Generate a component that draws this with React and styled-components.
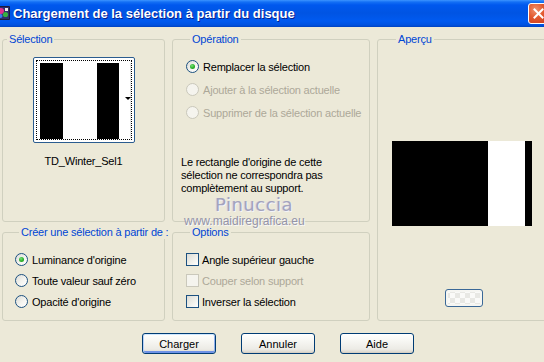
import React from 'react';
import styled, { createGlobalStyle } from 'styled-components';

const GlobalStyle = createGlobalStyle`
  html, body { margin: 0; padding: 0; background: #ECE9D8; }
  body {
    width: 544px; height: 362px; overflow: hidden;
    font-family: "Liberation Sans", Arial, sans-serif;
    font-size: 11px;
  }
  #root { width: 544px; height: 362px; }
`;

const Window = styled.div`
  position: relative;
  width: 544px;
  height: 362px;
  background: #ECE9D8;
  display: flex;
  flex-direction: column;
  overflow: hidden;
  color: #000;
  font-family: "Liberation Sans", Arial, sans-serif;
  font-size: 11px;
  letter-spacing: -0.2px;
`;

const TitleBar = styled.div`
  flex: none;
  height: 27px;
  display: flex;
  align-items: center;
  background: linear-gradient(180deg,
    #3D95FF 0px, #1470F5 2px, #0058EE 5px, #0054E3 13px,
    #005AF0 21px, #0052E0 25px, #0042C0 27px);
`;

const AppIcon = styled.svg`
  flex: none;
  width: 14px;
  height: 14px;
  margin-left: -4px;
  margin-top: -1px;
`;

const TitleText = styled.div`
  margin-left: 3px;
  color: #fff;
  font-family: "Liberation Sans", Arial, sans-serif;
  font-weight: bold;
  font-size: 13px;
  letter-spacing: 0;
  text-shadow: 1px 1px 0 #0A1E8C;
  white-space: nowrap;
`;

const CloseButton = styled.div`
  flex: none;
  margin-left: auto;
  margin-right: -5px;
  width: 21px;
  height: 21px;
  box-sizing: border-box;
  border: 1px solid #fff;
  border-radius: 3px;
  background: radial-gradient(circle at 35% 30%, #F0926E 0%, #E2592F 45%, #C8391A 100%);
  display: flex;
  align-items: center;
  justify-content: center;
`;

const Body = styled.div`
  flex: 1;
  display: flex;
  flex-direction: column;
  padding: 6px 0 0 2px;
`;

const Groups = styled.div`
  display: grid;
  grid-template-columns: 163px 198px 175px;
  grid-template-rows: 189px 95px;
  column-gap: 7px;
  row-gap: 4px;
  grid-template-areas:
    "sel op prev"
    "src opt prev";
`;

const Group = styled.fieldset`
  grid-area: ${p => p.$area};
  margin: 0;
  padding: 0;
  min-width: 0;
  border: 1px solid #D0D0BF;
  border-radius: 3px;
  display: flex;
  flex-direction: column;
  align-items: ${p => (p.$center ? 'center' : 'flex-start')};
  padding-left: ${p => p.$padLeft || 0}px;
  padding-top: ${p => p.$padTop || 0}px;
`;

const Legend = styled.legend`
  margin-left: 4px;
  padding: 0 2px;
  line-height: 13px;
  color: #0046D5;
  white-space: nowrap;
`;

const Thumb = styled.div`
  width: 102px;
  height: 86px;
  box-sizing: border-box;
  border: 1px solid #2B5C8F;
  border-radius: 2px;
  background: #fff;
  padding: 2px;
  display: flex;
`;

const FocusRect = styled.div`
  position: relative;
  flex: 1;
  border: 1px dotted #000;
  padding: 2px 0 0 3px;
  display: flex;
`;

const Strips = styled.div`
  flex: 1;
  display: flex;
`;

const Strip = styled.div`
  flex: ${p => (p.$w ? `0 0 ${p.$w}px` : '1')};
  background: ${p => p.$c};
  border-right: ${p => (p.$edge ? '1px solid #E4E4E4' : 'none')};
`;

const DropArrow = styled.div`
  position: absolute;
  right: 0;
  top: 36px;
  width: 0;
  height: 0;
  border-left: 3px solid transparent;
  border-right: 3px solid transparent;
  border-top: 3px solid #000;
`;

const ThumbLabel = styled.div`
  margin-top: 12px;
  line-height: 13px;
`;

const OptionList = styled.div`
  display: flex;
  flex-direction: column;
  gap: ${p => p.$gap}px;
  margin-top: ${p => p.$top}px;
`;

const OptionRow = styled.div`
  display: flex;
  align-items: center;
  gap: ${p => p.$gap || 4}px;
  height: 13px;
  white-space: nowrap;
  color: ${p => (p.$disabled ? '#ACA899' : '#000')};
`;

const RadioCircle = styled.span`
  flex: none;
  width: 13px;
  height: 13px;
  box-sizing: border-box;
  border-radius: 50%;
  border: 1px solid ${p => (p.$disabled ? '#CAC8BB' : '#1C5180')};
  background: ${p =>
    p.$disabled ? '#F5F4EE' : 'linear-gradient(135deg, #DCDCD7 0%, #F4F4F0 55%, #FFFFFF 100%)'};
  display: flex;
  align-items: center;
  justify-content: center;
  &::after {
    content: '';
    display: ${p => (p.$checked ? 'block' : 'none')};
    width: 5px;
    height: 5px;
    border-radius: 50%;
    background: radial-gradient(circle at 40% 35%, #7BE07B 0%, #2DB42D 50%, #178A17 100%);
  }
`;

const CheckSquare = styled.span`
  flex: none;
  width: 13px;
  height: 13px;
  box-sizing: border-box;
  border: 1px solid ${p => (p.$disabled ? '#CAC8BB' : '#1C5180')};
  background: ${p =>
    p.$disabled ? '#F5F4EE' : 'linear-gradient(135deg, #DCDCD7 0%, #F0F0EA 55%, #FFFFFF 100%)'};
`;

const Note = styled.div`
  margin-top: 37px;
  margin-left: -5px;
  line-height: 13px;
`;

const Preview = styled.div`
  margin-top: 95px;
  display: flex;
  width: 140px;
  height: 85px;
`;

const SmallButton = styled.div`
  margin-top: 63px;
  margin-left: 53px;
  width: 38px;
  height: 18px;
  box-sizing: border-box;
  border: 1px solid #3A6897;
  border-radius: 3px;
  background:
    repeating-conic-gradient(#FAFAF8 0 25%, #E8E8E4 0 50%) 9px 3px / 10px 10px,
    #F4F4F0;
  background-clip: padding-box;
  box-shadow: inset 0 0 0 2px #F6F6F2;
`;

const ButtonRow = styled.div`
  margin-top: 12px;
  padding-left: 140px;
  display: flex;
  gap: 25px;
`;

const Button = styled.div`
  width: 74px;
  height: 21px;
  box-sizing: border-box;
  border: 1px solid #003C74;
  border-radius: 3px;
  background: linear-gradient(180deg, #FFFFFF 0%, #F6F6F2 40%, #ECEBE5 80%, #D8D3C8 100%);
  box-shadow: ${p =>
    p.$default
      ? 'inset 0 1px 0 #CEE7FF, inset 1px 0 0 #B9D1F8, inset -1px 0 0 #8FB0EC, inset 0 -2px 0 #6F92E6'
      : 'inset 0 -1px 0 #D6D0C5'};
  display: flex;
  align-items: center;
  justify-content: center;
  letter-spacing: 0;
`;

const Watermark = styled.div`
  position: absolute;
  left: 184px;
  top: 194px;
  display: flex;
  flex-direction: column;
  pointer-events: none;
  letter-spacing: 0;
`;

const WatermarkName = styled.div`
  margin-left: 31px;
  font-family: "DejaVu Sans", "Liberation Sans", sans-serif;
  font-size: 18px;
  line-height: 22px;
  color: #A3A3BD;
  letter-spacing: 0.5px;
  text-shadow: 1px 1px 0 #F4F4F8, -1px 0 0 #D6D6E0;
`;

const WatermarkUrl = styled.div`
  font-family: "Liberation Sans", Arial, sans-serif;
  font-size: 12px;
  line-height: 10px;
  height: 10px;
  color: #9494A8;
  text-shadow: 1px 1px 0 #F8F8FA;
`;

function Radio({ label, checked, disabled }) {
  return (
    <OptionRow $disabled={disabled}>
      <RadioCircle $checked={checked} $disabled={disabled} />
      <span>{label}</span>
    </OptionRow>
  );
}

function Check({ label, disabled }) {
  return (
    <OptionRow $disabled={disabled} $gap={3}>
      <CheckSquare $disabled={disabled} />
      <span>{label}</span>
    </OptionRow>
  );
}

export default function App() {
  return (
    <>
      <GlobalStyle />
      <Window>
        <TitleBar>
          <AppIcon viewBox="0 0 14 14">
            <rect x="0" y="0" width="14" height="14" rx="1" fill="#1B1B3A" />
            <rect x="1" y="1" width="12" height="12" fill="#2E2E6E" />
            <circle cx="5" cy="5" r="3" fill="#E0308C" />
            <circle cx="9.5" cy="8.5" r="2.6" fill="#38B040" />
            <circle cx="4.5" cy="10" r="2" fill="#3C7CF0" />
            <rect x="9" y="2" width="3" height="3" fill="#F0F0F0" />
          </AppIcon>
          <TitleText>Chargement de la sélection à partir du disque</TitleText>
          <CloseButton>
            <svg width="11" height="11" viewBox="0 0 11 11">
              <path d="M1.5 1.5 L9.5 9.5 M9.5 1.5 L1.5 9.5" stroke="#fff" strokeWidth="2" strokeLinecap="square" />
            </svg>
          </CloseButton>
        </TitleBar>
        <Body>
          <Groups>
            <Group $area="sel" $center $padTop={11}>
              <Legend>Sélection</Legend>
              <Thumb>
                <FocusRect>
                  <Strips>
                    <Strip $c="#000" $w={23} />
                    <Strip $c="#fff" $w={34} />
                    <Strip $c="#000" $w={22} />
                    <Strip $c="#fff" $edge />
                  </Strips>
                  <DropArrow />
                </FocusRect>
              </Thumb>
              <ThumbLabel>TD_Winter_Sel1</ThumbLabel>
            </Group>

            <Group $area="op" $padLeft={13}>
              <Legend>Opération</Legend>
              <OptionList $gap={10} $top={14}>
                <Radio label="Remplacer la sélection" checked />
                <Radio label="Ajouter à la sélection actuelle" disabled />
                <Radio label="Supprimer de la sélection actuelle" disabled />
              </OptionList>
              <Note>
                Le rectangle d'origine de cette
                <br />
                sélection ne correspondra pas
                <br />
                complètement au support.
              </Note>
            </Group>

            <Group $area="prev" $padLeft={14}>
              <Legend>Aperçu</Legend>
              <Preview>
                <Strip $c="#000" $w={96} />
                <Strip $c="#fff" $w={37} />
                <Strip $c="#000" />
              </Preview>
              <SmallButton />
            </Group>

            <Group $area="src" $padLeft={12}>
              <Legend>Créer une sélection à partir de :</Legend>
              <OptionList $gap={8} $top={14}>
                <Radio label="Luminance d'origine" checked />
                <Radio label="Toute valeur sauf zéro" />
                <Radio label="Opacité d'origine" />
              </OptionList>
            </Group>

            <Group $area="opt" $padLeft={13}>
              <Legend>Options</Legend>
              <OptionList $gap={8} $top={14}>
                <Check label="Angle supérieur gauche" />
                <Check label="Couper selon support" disabled />
                <Check label="Inverser la sélection" />
              </OptionList>
            </Group>
          </Groups>

          <ButtonRow>
            <Button $default>Charger</Button>
            <Button>Annuler</Button>
            <Button>Aide</Button>
          </ButtonRow>
        </Body>
        <Watermark>
          <WatermarkName>Pinuccia</WatermarkName>
          <WatermarkUrl>www.maidiregrafica.eu</WatermarkUrl>
        </Watermark>
      </Window>
    </>
  );
}
